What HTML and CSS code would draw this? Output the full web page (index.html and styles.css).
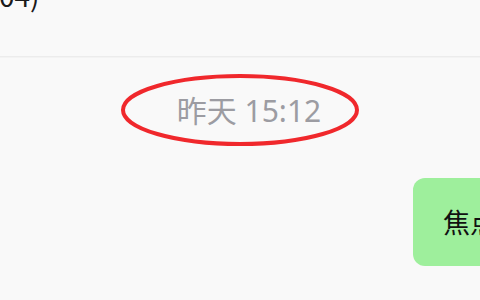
FILE: index.html
```html
<!DOCTYPE html>
<html lang="zh-CN">
<head>
    <meta charset="UTF-8">
    <title>聊天</title>
    <link rel="stylesheet" href="styles.css">
</head>
<body>

    <div class="chat-header">
        <span class="chat-title">群聊(104)</span>
    </div>

    <div class="chat-body">
        <div class="time-row">
            <span class="time-label">昨天 15:12</span>
            <svg class="mark" width="244" height="76" viewBox="0 0 244 76">
                <ellipse cx="122" cy="37" rx="117" ry="34" fill="none" stroke="#f0282c" stroke-width="4"/>
            </svg>
        </div>

        <div class="msg-row">
            <div class="bubble">焦点新闻</div>
        </div>
    </div>

</body>
</html>
```

FILE: styles.css
```css
body {
    margin: 0;
    padding: 0;
    background-color: #f9f9f9;
    font-family: "Noto Sans CJK SC", "Noto Sans", sans-serif;
    overflow: hidden;
}

.chat-header {
    height: 56px;
    border-bottom: 1px solid #ececec;
    box-shadow: 0 1px 0 #f3f3f3;
    overflow: hidden;
}
.chat-title {
    display: block;
    margin-top: -23px;
    margin-left: -82px;
    font-size: 28px;
    line-height: 36px;
    color: #1a1a1a;
    white-space: nowrap;
}

.chat-body {
    padding-top: 33px;
}

.time-row {
    position: relative;
    text-align: center;
    height: 42px;
}
.time-label {
    display: inline-block;
    margin-left: 18px;
    font-family: "Noto Sans", "Noto Sans CJK SC", sans-serif;
    font-size: 30px;
    line-height: 42px;
    color: #9c9ca2;
}
.mark {
    position: absolute;
    top: -17px;
    left: 118px;
}

.msg-row {
    display: flex;
    padding-left: 413px;
    margin-top: 46px;
}
.bubble {
    flex-shrink: 0;
    height: 88px;
    padding: 0 28px 0 30px;
    border-radius: 12px;
    background: #9eef9c;
    color: #111;
    font-size: 27px;
    line-height: 88px;
    white-space: nowrap;
}
```
